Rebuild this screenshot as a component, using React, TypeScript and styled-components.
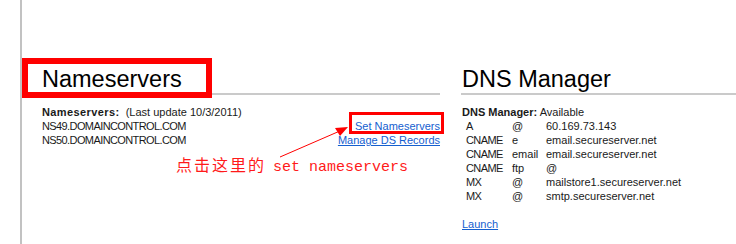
import styled, { createGlobalStyle } from 'styled-components';

const GlobalStyle = createGlobalStyle`
    html, body {
        margin: 0;
        padding: 0;
        background: #fff;
    }
    body {
        font-family: "Liberation Sans", Arial, sans-serif;
        font-size: 11px;
        color: #1a1a1a;
    }
`;

const records = [
    { type: 'A', name: '@', value: '60.169.73.143' },
    { type: 'CNAME', name: 'e', value: 'email.secureserver.net' },
    { type: 'CNAME', name: 'email', value: 'email.secureserver.net' },
    { type: 'CNAME', name: 'ftp', value: '@' },
    { type: 'MX', name: '@', value: 'mailstore1.secureserver.net' },
    { type: 'MX', name: '@', value: 'smtp.secureserver.net' },
];

const App = () => (
    <>
        <GlobalStyle />
        <Page>
            <LeftColumn>
                <SectionTitle $indent={20}>Nameservers</SectionTitle>
                <SectionBody $indent={20}>
                    <Row>
                        <span>
                            <Label $spread>Nameservers:</Label>&nbsp; (Last update 10/3/2011)
                        </span>
                    </Row>
                    <Row>
                        <Caps>NS49.DOMAINCONTROL.COM</Caps>
                        <TextLink href="#">Set Nameservers</TextLink>
                    </Row>
                    <Row>
                        <Caps>NS50.DOMAINCONTROL.COM</Caps>
                        <TextLink href="#">Manage DS Records</TextLink>
                    </Row>
                </SectionBody>

                <HighlightBox $left={0} $top={58} $width={190} $height={40} $stroke={6} />
                <HighlightBox $left={327} $top={112} $width={95} $height={22} $stroke={3} />
                <Arrow width="80" height="40" viewBox="0 0 80 40">
                    <line x1="1" y1="34" x2="62" y2="7.5" stroke="#ff0000" strokeWidth="1" />
                    <polygon points="69,4 56,5 61,13" fill="#ff0000" />
                </Arrow>
                <Note>
                    <NoteCjk>点击这里的</NoteCjk> <NoteLatin>set nameservers</NoteLatin>
                </Note>
            </LeftColumn>

            <RightColumn>
                <SectionTitle $indent={1}>DNS Manager</SectionTitle>
                <SectionBody $indent={1}>
                    <Row>
                        <span>
                            <Label>DNS Manager:</Label> Available
                        </span>
                    </Row>
                    <RecordGrid>
                        {records.map((r, i) => (
                            <RecordRow key={i}>
                                <Caps>{r.type}</Caps>
                                <span>{r.name}</span>
                                <span>{r.value}</span>
                            </RecordRow>
                        ))}
                    </RecordGrid>
                    <Row>
                        <TextLink href="#">Launch</TextLink>
                    </Row>
                </SectionBody>
            </RightColumn>
        </Page>
    </>
);

export default App;

const Page = styled.div`
    display: flex;
    gap: 21px;
    min-height: 244px;
    margin-left: 20px;
    border-left: 2px solid #c2c2c2;
    box-sizing: border-box;
`;

const LeftColumn = styled.div`
    position: relative;
    width: 418px;
    flex: none;
`;

const RightColumn = styled.div`
    flex: 1;
`;

const SectionTitle = styled.h2<{ $indent: number }>`
    margin: 0;
    padding: 65px 0 0 ${(p) => p.$indent}px;
    font-family: "Liberation Sans", Arial, sans-serif;
    font-size: 23.5px;
    font-weight: normal;
    line-height: 28px;
    color: #000;
    border-bottom: 2px solid #cacaca;
`;

const SectionBody = styled.div<{ $indent: number }>`
    margin-top: 10px;
    padding-left: ${(p) => p.$indent}px;
    line-height: 14px;
`;

const Row = styled.div`
    display: flex;
    justify-content: space-between;
    height: 14px;
    white-space: nowrap;
`;

const Label = styled.b<{ $spread?: boolean }>`
    font-weight: bold;
    letter-spacing: ${(p) => (p.$spread ? '0.4px' : '0')};
`;

const Caps = styled.span`
    letter-spacing: -0.6px;
`;

const TextLink = styled.a`
    color: #1560cf;
    text-decoration: underline;
`;

const RecordGrid = styled.div`
    margin-bottom: 14px;
`;

const RecordRow = styled.div`
    display: grid;
    grid-template-columns: 46px 34px auto;
    padding-left: 4px;
    height: 14px;
    white-space: nowrap;
`;

const HighlightBox = styled.div<{ $left: number; $top: number; $width: number; $height: number; $stroke: number }>`
    position: absolute;
    left: ${(p) => p.$left}px;
    top: ${(p) => p.$top}px;
    width: ${(p) => p.$width}px;
    height: ${(p) => p.$height}px;
    border: ${(p) => p.$stroke}px solid #ff0000;
    box-sizing: border-box;
    pointer-events: none;
`;

const Arrow = styled.svg`
    position: absolute;
    left: 257px;
    top: 123px;
    overflow: visible;
`;

const Note = styled.div`
    position: absolute;
    left: 154px;
    top: 154px;
    line-height: 20px;
    color: #ff1a1a;
    white-space: nowrap;
`;

const NoteCjk = styled.span`
    font-family: "Noto Sans CJK SC", sans-serif;
    font-size: 16px;
    letter-spacing: 2px;
`;

const NoteLatin = styled.span`
    margin-left: 4px;
    font-family: "Liberation Mono", "Courier New", monospace;
    font-size: 15px;
`;
